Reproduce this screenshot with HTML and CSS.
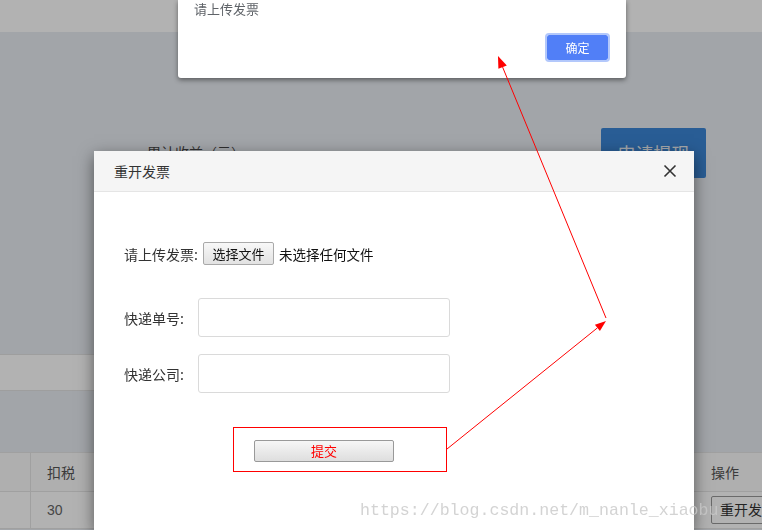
FILE: index.html
```html
<!DOCTYPE html>
<html lang="zh-CN">
<head>
  <meta charset="UTF-8">
  <meta name="viewport" content="width=device-width, initial-scale=1">
  <title>重开发票</title>
  <link rel="stylesheet" href="styles.css">
</head>
<body>
  <div class="page">
    <div class="topbar"></div>

    <div class="summary">
      <span class="summary-label">累计收益（元）</span>
      <button class="btn-withdraw">申请提现</button>
    </div>

    <div class="tabs"></div>

    <table class="list">
      <tr class="head">
        <th class="c-first"></th>
        <th class="c-tax">扣税</th>
        <th></th>
        <th class="c-op">操作</th>
      </tr>
      <tr>
        <td class="c-first"></td>
        <td class="c-tax">30</td>
        <td></td>
        <td class="c-op"><span class="btn-reopen">重开发票</span></td>
      </tr>
    </table>
  </div>

  <div class="overlay"></div>

  <div class="modal">
    <div class="modal-header">
      <span class="modal-title">重开发票</span>
      <svg class="close" width="14" height="14" viewBox="0 0 14 14">
        <path d="M1.5 1.5 L12.5 12.5 M12.5 1.5 L1.5 12.5" stroke="#333" stroke-width="1.6" fill="none"/>
      </svg>
    </div>
    <div class="modal-body">
      <div class="file-row">
        <span class="label">请上传发票:</span>
        <span class="file-btn">选择文件</span>
        <span class="file-name">未选择任何文件</span>
      </div>
      <div class="field">
        <span class="label">快递单号:</span>
        <input class="text-input" type="text">
      </div>
      <div class="field field-second">
        <span class="label">快递公司:</span>
        <input class="text-input" type="text">
      </div>
      <div class="mark-box">
        <span class="btn-submit">提交</span>
      </div>
    </div>
  </div>

  <div class="alert">
    <div class="alert-msg">请上传发票</div>
    <div class="alert-actions">
      <button class="btn-ok">确定</button>
    </div>
  </div>

  <!-- annotation arrows -->
  <svg class="arrows" width="762" height="530" viewBox="0 0 762 530">
    <line x1="447" y1="449" x2="597.4" y2="327.9" stroke="#f00" stroke-width="1"/>
    <polygon points="606,321 599.9,331 594.9,324.8" fill="#f00"/>
    <line x1="606" y1="318" x2="502.6" y2="67.1" stroke="#f00" stroke-width="1"/>
    <polygon points="498,56 506.8,65.4 498.4,68.8" fill="#f00"/>
  </svg>

  <div class="watermark">https://blog.csdn.net/m_nanle_xiaobu</div>
</body>
</html>
```

FILE: styles.css
```css
html, body {
  margin: 0;
  height: 100%;
  overflow: hidden;
}
body {
  font-family: "Liberation Sans", "Noto Sans CJK SC", sans-serif;
  font-size: 14px;
  color: #333;
  background: #e9edf3;
}
.page {
  width: 762px;
  height: 530px;
  overflow: hidden;
}
.topbar {
  height: 32px;
  background: #fff;
}
.summary {
  display: flex;
  justify-content: space-between;
  align-items: center;
  height: 50px;
  margin-top: 96px;
  padding: 0 56px 0 147px;
}
.summary-label {
  font-size: 14px;
  line-height: 16px;
  color: #444;
}
.btn-withdraw {
  width: 105px;
  height: 50px;
  border: none;
  border-radius: 2px;
  background: #3c86d6;
  color: #eef2f7;
  font-family: "Noto Sans CJK SC", sans-serif;
  font-size: 18px;
  padding: 0;
}
.tabs {
  width: 420px;
  height: 35px;
  margin-top: 176px;
  background: #fff;
  border-top: 1px solid #e3e3e3;
  border-bottom: 1px solid #e3e3e3;
}
.list {
  width: 762px;
  margin-top: 61px;
  border-collapse: collapse;
  table-layout: fixed;
  background: #fff;
}
.list th, .list td {
  height: 38px;
  padding: 0 16px;
  text-align: left;
  font-weight: normal;
  color: #666;
  border-top: 1px solid #e5e5e5;
  border-bottom: 1px solid #e5e5e5;
  white-space: nowrap;
}
.list .head th {
  background: #fbfbfb;
  color: #555;
}
.list td {
  height: 36px;
}
.list .c-first {
  width: 30px;
  padding: 0;
  border-right: 1px solid #e5e5e5;
}
.list .c-tax {
  width: 80px;
}
.list .c-op {
  width: 35px;
}
.btn-reopen {
  display: inline-block;
  height: 26px;
  line-height: 26px;
  padding: 0 8px;
  border: 1px solid #999;
  border-radius: 2px;
  color: #333;
  background: #fff;
}
.overlay {
  position: fixed;
  inset: 0;
  background: rgba(0, 0, 0, 0.3);
}

.modal {
  position: absolute;
  left: 94px;
  top: 151px;
  width: 600px;
  height: 379px;
  background: #fff;
  box-shadow: 0 5px 15px rgba(0, 0, 0, 0.5);
}
.modal-header {
  display: flex;
  justify-content: space-between;
  align-items: center;
  height: 40px;
  padding: 0 17px 0 20px;
  background: #f5f5f5;
  border-bottom: 1px solid #e5e5e5;
}
.modal-title {
  font-family: "Noto Sans CJK SC", sans-serif;
  font-size: 14px;
  color: #333;
  line-height: 20px;
}
.modal-body {
  padding: 50px 30px 0;
}
.label {
  font-family: "Noto Sans CJK SC", sans-serif;
  font-size: 14px;
  color: #333;
}
.file-row {
  display: flex;
  align-items: center;
  height: 23px;
}
.file-row .label {
  margin-right: 5px;
}
.file-btn {
  box-sizing: border-box;
  height: 23px;
  width: 71px;
  line-height: 21px;
  text-align: center;
  border: 1px solid #a9a9a9;
  border-radius: 2px;
  background: linear-gradient(#f8f8f8, #e2e2e2);
  font-family: "Noto Sans CJK SC", sans-serif;
  font-size: 13px;
  color: #111;
}
.file-name {
  margin-left: 5px;
  font-family: "Noto Sans CJK SC", sans-serif;
  font-size: 13.5px;
  color: #111;
}
.field {
  display: flex;
  align-items: center;
  margin-top: 33px;
}
.field-second {
  margin-top: 17px;
}
.field .label {
  width: 74px;
}
.text-input {
  box-sizing: border-box;
  width: 252px;
  height: 39px;
  margin: 0;
  border: 1px solid #dadada;
  border-radius: 3px;
  background: #fff;
}
.mark-box {
  box-sizing: border-box;
  width: 214px;
  height: 45px;
  margin: 34px 0 0 109px;
  padding: 12px 0 0 20px;
  border: 1px solid #f00;
}
.btn-submit {
  box-sizing: border-box;
  display: block;
  width: 140px;
  height: 22px;
  line-height: 20px;
  text-align: center;
  border: 1px solid #999;
  border-radius: 2px;
  background: linear-gradient(#f6f6f6, #dedede);
  font-family: "Noto Sans CJK SC", sans-serif;
  font-size: 13px;
  color: #f00;
}

.alert {
  position: absolute;
  left: 178px;
  top: 0;
  width: 448px;
  height: 78px;
  background: #fff;
  border-radius: 0 0 3px 3px;
  box-shadow: 0 2px 5px rgba(0, 0, 0, 0.45);
}
.alert-msg {
  padding: 1px 16px 0;
  line-height: 16px;
  font-family: "Noto Sans CJK SC", sans-serif;
  font-size: 13px;
  color: #5f6368;
}
.alert-actions {
  display: flex;
  justify-content: flex-end;
  padding-right: 16px;
  margin-top: 16px;
}
.btn-ok {
  box-sizing: border-box;
  width: 65px;
  height: 29px;
  padding: 0;
  border: 2px solid #b3c8fb;
  border-radius: 4px;
  background: #517ff7;
  background-clip: padding-box;
  color: #fff;
  font-family: "Noto Sans CJK SC", sans-serif;
  font-size: 12px;
}

.arrows {
  position: absolute;
  left: 0;
  top: 0;
  pointer-events: none;
}
.watermark {
  position: absolute;
  left: 360px;
  top: 500px;
  white-space: nowrap;
  font-family: "Liberation Mono", monospace;
  font-size: 16.6px;
  line-height: 22px;
  color: rgba(200, 200, 200, 0.8);
  pointer-events: none;
}
```
